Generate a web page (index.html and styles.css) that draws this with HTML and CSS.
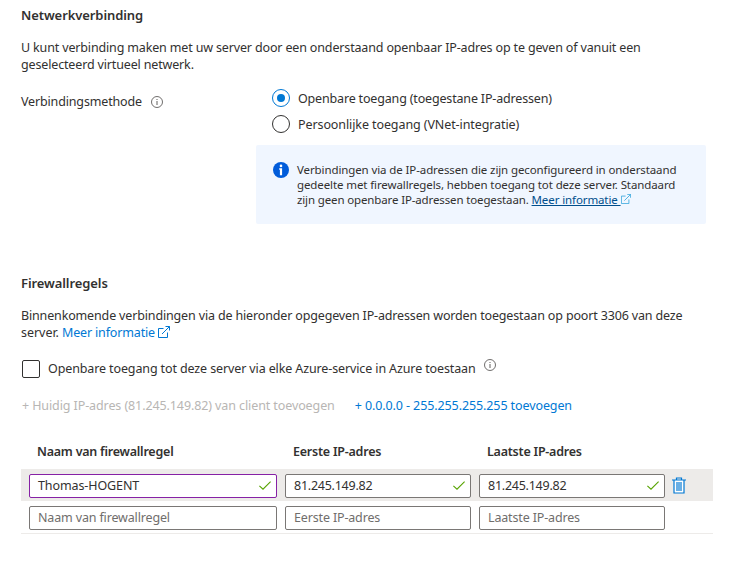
FILE: index.html
```html
<!DOCTYPE html>
<html lang="nl">
<head>
<meta charset="utf-8">
<title>Netwerkverbinding</title>
<link rel="stylesheet" href="styles.css">
</head>
<body>
<svg class="symbols" aria-hidden="true">
  <symbol id="info" viewBox="0 0 12 12"><circle cx="6" cy="6" r="5.5" fill="none" stroke="#605e5c" stroke-width="0.9"/><path d="M6 5v4M6 3v1" stroke="#605e5c"/></symbol>
  <symbol id="external" viewBox="0 0 12 12"><path d="M5.500 2.500H.5v9h9V6.500M7.500.5h4v4M11.500.5L4 8" fill="none" stroke="currentColor"/></symbol>
  <symbol id="check" viewBox="0 0 12 9"><path d="M.4 4.800L4 8.200L11.600.6" fill="none" stroke="#57a300" stroke-width="1.100"/></symbol>
</svg>
<main class="page">
  <section class="network">
    <h2 class="title">Netwerkverbinding</h2>
    <p class="intro">U kunt verbinding maken met uw server door een onderstaand openbaar IP-adres op te geven of vanuit een<br>geselecteerd virtueel netwerk.</p>
    <div class="method">
      <div class="method-label"><span>Verbindingsmethode</span><svg class="info"><use href="#info"/></svg></div>
      <div class="options">
        <label class="option"><span class="radio selected"></span><span class="public">Openbare toegang (toegestane IP-adressen)</span></label>
        <label class="option"><span class="radio"></span><span class="private">Persoonlijke toegang (VNet-integratie)</span></label>
      </div>
    </div>
    <div class="notice">
      <svg class="notice-icon" viewBox="0 0 16 16"><circle cx="8" cy="8" r="8" fill="#015cda"/><circle cx="8" cy="3.900" r="1.300" fill="#fff"/><path d="M6.200 6.300h2.900v7H6.900V7.700h-.7z" fill="#fff"/></svg>
      <p>Verbindingen via de IP-adressen die zijn geconfigureerd in onderstaand<br>gedeelte met firewallregels, hebben toegang tot deze server. Standaard<br><span class="closing">zijn geen openbare IP-adressen toegestaan.</span> <a class="notice-link">Meer informatie&nbsp;<svg class="external"><use href="#external"/></svg></a></p>
    </div>
  </section>
  <section class="firewall">
    <h2 class="title">Firewallregels</h2>
    <p class="intro">Binnenkomende verbindingen via de hieronder opgegeven IP-adressen worden toegestaan op poort 3306 van deze<br><span class="server">server.</span> <a class="link">Meer informatie<svg class="external"><use href="#external"/></svg></a></p>
    <label class="allow"><span class="box"></span><span class="allow-text">Openbare toegang tot deze server via elke Azure-service in Azure toestaan</span><svg class="info"><use href="#info"/></svg></label>
    <div class="actions"><span class="disabled">+ Huidig IP-adres (81.245.149.82) van client toevoegen</span><a class="link">+ 0.0.0.0 - 255.255.255.255 toevoegen</a></div>
    <div class="table">
      <div class="row head"><span>Naam van firewallregel</span><span>Eerste IP-adres</span><span>Laatste IP-adres</span></div>
      <div class="row active">
        <div class="field focus"><span class="name">Thomas-HOGENT</span><svg class="check"><use href="#check"/></svg></div>
        <div class="field"><span class="ip">81.245.149.82</span><svg class="check"><use href="#check"/></svg></div>
        <div class="field"><span class="ip">81.245.149.82</span><svg class="check"><use href="#check"/></svg></div>
        <svg class="trash" viewBox="0 0 14 17"><path d="M2 3h10v13H2z" fill="#fff"/><path d="M4 5h6v9H4z" fill="#69afe5"/><path d="M0 3h14M2 3v13h10V3M4.500 3V1h5v2" fill="none" stroke="#0078d4" stroke-width="1.200"/></svg>
      </div>
      <div class="row empty">
        <div class="field"><span>Naam van firewallregel</span></div>
        <div class="field"><span>Eerste IP-adres</span></div>
        <div class="field"><span>Laatste IP-adres</span></div>
      </div>
    </div>
  </section>
</main>
</body>
</html>
```

FILE: styles.css
```css
* { box-sizing: border-box; }
body { margin: 0; background: #fff; color: #323130; font: 12.5px/17px "Noto Sans", "Open Sans", sans-serif; letter-spacing: -.153px; white-space: nowrap; }
h2, p { margin: 0; }
.symbols { display: none; }
.page { width: 736px; height: 561px; padding: 7px 23px 0 21px; overflow: hidden; }
.title { font-size: 13px; line-height: 17px; font-weight: 600; letter-spacing: -.09px; }
.intro { margin-top: 15px; }
.info { width: 12px; height: 12px; flex: none; }
.method { display: flex; margin-top: 15px; }
.method-label { display: flex; width: 251px; height: 26px; align-items: center; gap: 9px; padding-top: 1px; }
.option { display: flex; align-items: center; height: 26px; gap: 8px; }
.public { letter-spacing: -.17px; }
.private { letter-spacing: -.095px; }
.options { margin-top: -3px; }
.radio { width: 18px; height: 18px; border: 1px solid #323130; border-radius: 50%; display: grid; place-items: center; }
.radio.selected { border-color: #0078d4; }
.radio.selected::after { content: ""; width: 8px; height: 8px; border-radius: 50%; background: #0078d4; }
.notice { display: flex; width: 450px; height: 79px; margin: 8px 0 0 235px; padding: 17px; gap: 8px; background: #f0f6ff; border-radius: 2px; font-size: 11.5px; line-height: 15px; letter-spacing: -.105px; }
.notice-icon { width: 16px; height: 16px; flex: none; }
.closing { letter-spacing: -.135px; }
.notice-link { color: #004e8c; text-decoration: underline; }
.external { width: 12px; height: 12px; margin-left: 3px; vertical-align: -1px; }
.notice-link .external { width: 10px; height: 10px; margin-left: 0; vertical-align: 0; color: #32a5dc; }
.link { color: #0078d4; }
.server { letter-spacing: -.04px; }
.firewall { margin-top: 51px; }
.allow { display: flex; align-items: center; height: 18px; margin: 19px 0 0 1px; }
.allow-text { letter-spacing: -.12px; margin-top: -1px; }
.box { width: 18px; height: 18px; border: 1px solid #323130; border-radius: 2px; margin-right: 8px; }
.allow .info { margin: -8px 0 0 8px; }
.actions { display: flex; gap: 20px; margin: 19px 0 0 1px; letter-spacing: -.1px; }
.disabled { color: #b8b6b4; }
.table { width: 692px; margin-top: 19px; border-bottom: 1px solid #edebe9; }
.row { display: grid; grid-template-columns: 248px 186px 186px 14px; gap: 8px; padding: 1px 8px 0; align-items: center; height: 32px; }
.head { height: 36px; font-weight: 600; padding: 0 0 0 16px; letter-spacing: -.23px; }
.active { background: #edebe9; }
.field { display: flex; align-items: center; justify-content: space-between; height: 24px; border: 1px solid #7a7775; border-radius: 2px; background: #fff; padding: 0 5px 1px 8px; }
.focus { border-color: #8621a5; }
.name { letter-spacing: -.1px; }
.ip { letter-spacing: -.25px; }
.check { width: 12px; height: 9px; margin-top: 1px; }
.trash { width: 14px; height: 17px; margin-left: -1px; }
.empty { color: #706e6c; padding-top: 2px; }
```
